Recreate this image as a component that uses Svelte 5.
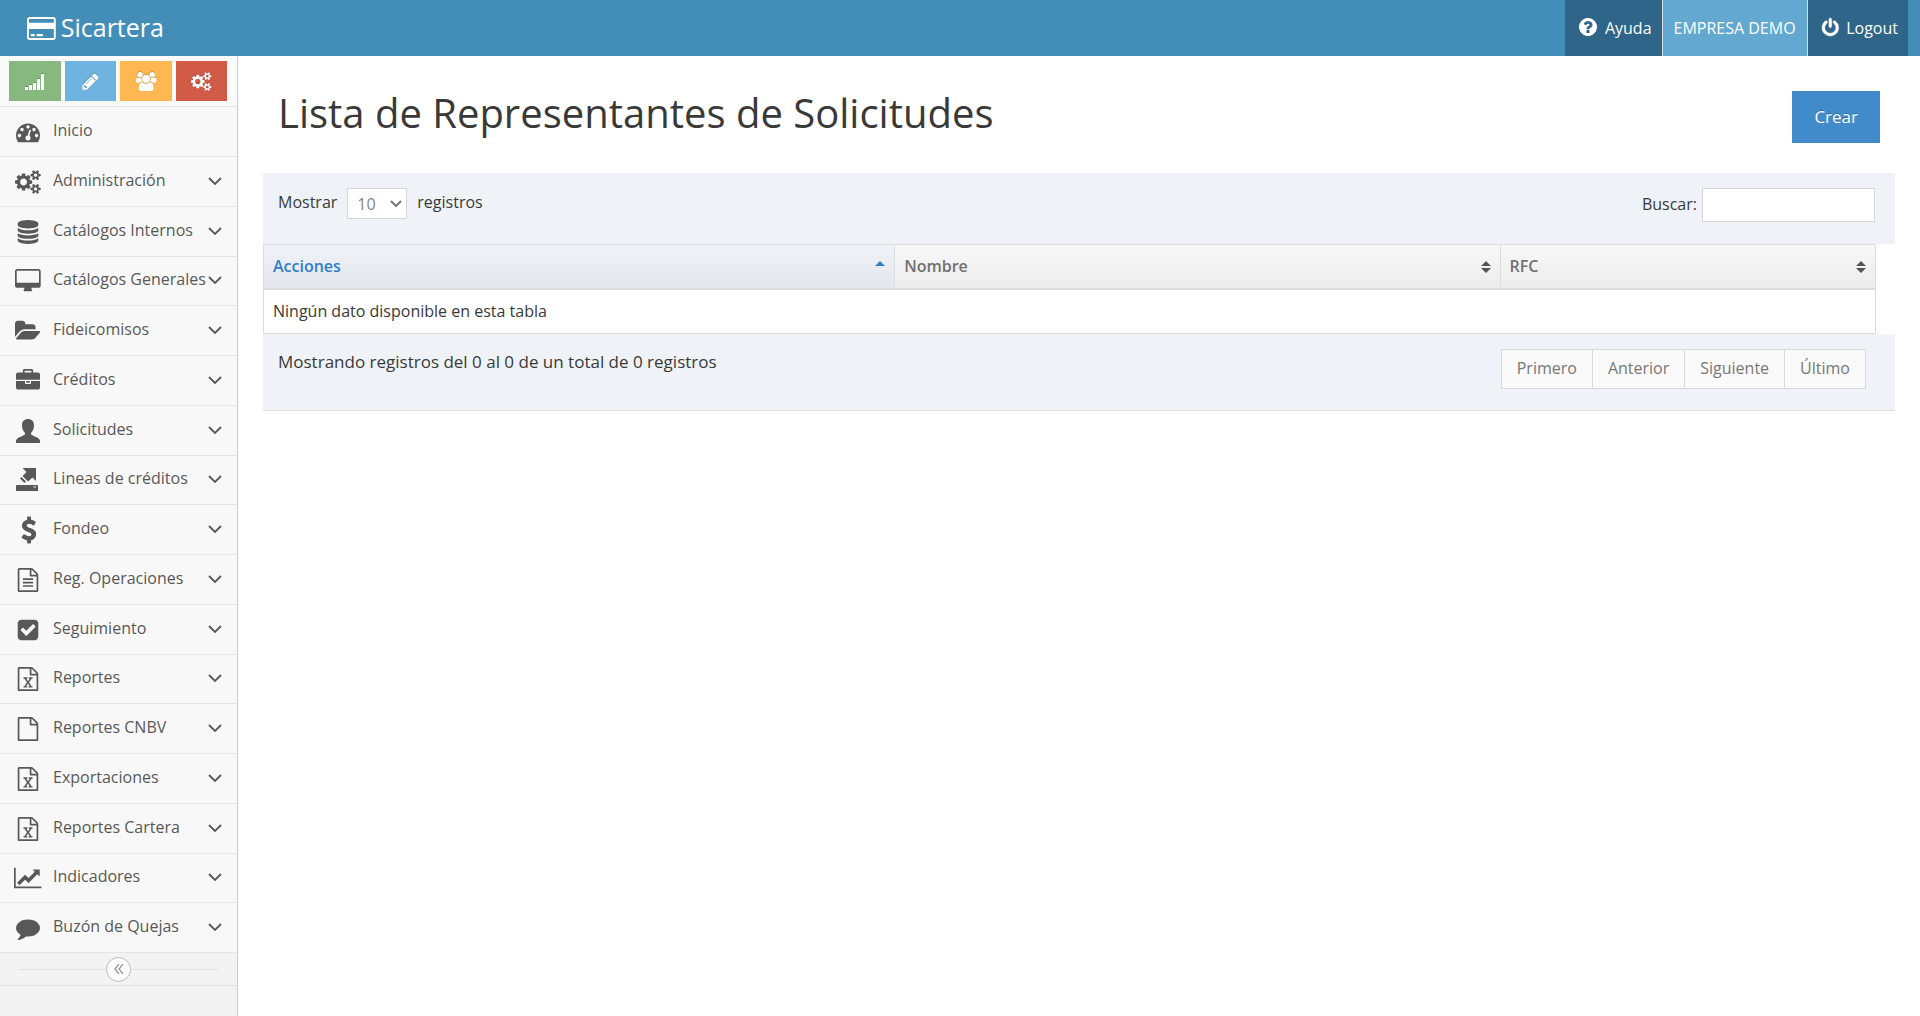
<script>
  const gears =
    'M832 896q0-106-75-181t-181-75-181 75-75 181 75 181 181 75 181-75 75-181zm768 512q0-52-38-90t-90-38-90 38-38 90q0 53 37.5 90.5t90.5 37.5 90.5-37.5 37.5-90.5zm0-1024q0-52-38-90t-90-38-90 38-38 90q0 53 37.5 90.5t90.5 37.5 90.5-37.5 37.5-90.5zm-384 421v185q0 10-7 19.5t-16 10.5l-155 24q-11 35-32 76 34 48 90 115 7 10 7 20 0 12-7 19-23 30-82.5 89.5t-78.5 59.5q-11 0-21-7l-115-90q-37 19-77 31-11 108-23 155-7 24-30 24h-186q-11 0-20-7.5t-10-17.5l-23-153q-34-10-75-31l-118 89q-7 7-20 7-11 0-21-8-144-133-144-160 0-9 7-19 10-14 41-53t47-61q-23-44-35-82l-152-24q-10-1-17-9.5t-7-19.5v-185q0-10 7-19.5t16-10.5l155-24q11-35 32-76-34-48-90-115-7-11-7-20 0-12 7-20 22-30 82-89t79-59q11 0 21 7l115 90q34-18 77-32 11-108 23-154 7-24 30-24h186q11 0 20 7.5t10 17.5l23 153q34 10 75 31l118-89q8-7 20-7 11 0 21 8 144 133 144 160 0 9-7 19-12 16-42 54t-45 60q23 48 34 82l152 23q10 2 17 10.5t7 19.5zm640 533v140q0 16-149 31-12 27-30 52 51 113 51 138 0 4-4 7-122 71-124 71-8 0-46-47t-52-68q-20 2-30 2t-30-2q-14 21-52 68t-46 47q-2 0-124-71-4-3-4-7 0-25 51-138-18-25-30-52-149-15-149-31v-140q0-16 149-31 13-29 30-52-51-113-51-138 0-4 4-7 4-2 35-20t59-34 30-16q8 0 46 46.5t52 67.5q20-2 30-2t30 2q51-71 92-112l6-2q4 0 124 70 4 3 4 7 0 25-51 138 17 23 30 52 149 15 149 31zm0-1024v140q0 16-149 31-12 27-30 52 51 113 51 138 0 4-4 7-122 71-124 71-8 0-46-47t-52-68q-20 2-30 2t-30-2q-14 21-52 68t-46 47q-2 0-124-71-4-3-4-7 0-25 51-138-18-25-30-52-149-15-149-31v-140q0-16 149-31 13-29 30-52-51-113-51-138 0-4 4-7 4-2 35-20t59-34 30-16q8 0 46 46.5t52 67.5q20-2 30-2t30 2q51-71 92-112l6-2q4 0 124 70 4 3 4 7 0 25-51 138 17 23 30 52 149 15 149 31z';
  const page =
    'M1596 380q28 28 48 76t20 88v1152q0 40-28 68t-68 28h-1344q-40 0-68-28t-28-68v-1600q0-40 28-68t68-28h896q40 0 88 20t76 48zm-444-244v376h376q-10-29-22-41l-313-313q-12-12-41-22zm384 1528v-1024h-416q-40 0-68-28t-28-68v-416h-768v1536h1280z';

  const icons = {
    signal: {
      box: '0 0 19 19',
      path: 'M0 15h3v3H0zM4 13h3v5H4zM8 11h3v7H8zM12 7h3v11h-3zM16 2h3v16h-3z'
    },
    pencil: {
      box: '0 0 1792 1792',
      path: 'M491 1536l91-91-235-235-91 91v107h128v128h107zm523-928q0-22-22-22-10 0-17 7l-542 542q-7 7-7 17 0 22 22 22 10 0 17-7l542-542q7-7 7-17zm-54-192l416 416-832 832h-416v-416zm683 96q0 53-37 90l-166 166-416-416 166-165q36-38 90-38 53 0 91 38l235 234q37 39 37 91z'
    },
    users: {
      box: '64 0 1920 1792',
      path: 'M657 896q-162 5-265 128h-134q-82 0-138-40.5t-56-118.5q0-353 124-353 6 0 43.5 21t97.5 42.5 119 21.5q67 0 133-23-5 37-5 66 0 159 93 283zm1071 637q0 120-73 189.5t-194 69.5h-874q-121 0-194-69.5t-73-189.5q0-53 3.5-103.5t14-109 26.5-108.5 43-97.5 62-81 85.5-53.5 111.5-20q10 0 43 21.5t73 48 107 48 135 21.5 135-21.5 107-48 73-48 43-21.5q61 0 111.5 20t85.5 53.5 62 81 43 97.5 26.5 108.5 14 109 3.5 103.5zm-1024-1277q0 106-75 181t-181 75-181-75-75-181 75-181 181-75 181 75 75 181zm704 384q0 159-112.5 271.5t-271.5 112.5-271.5-112.5-112.5-271.5 112.5-271.5 271.5-112.5 271.5 112.5 112.5 271.5zm576 225q0 78-56 118.5t-138 40.5h-134q-103-123-265-128 93-124 93-283 0-29-5-66 66 23 133 23 59 0 119-21.5t97.5-42.5 43.5-21q124 0 124 353zm-128-609q0 106-75 181t-181 75-181-75-75-181 75-181 181-75 181 75 75 181z'
    },
    gears: { box: '-64 0 1920 1792', path: gears },
    dashboard: {
      box: '0 0 1792 1792',
      path: 'M384 1152q0-53-37.5-90.5t-90.5-37.5-90.5 37.5-37.5 90.5 37.5 90.5 90.5 37.5 90.5-37.5 37.5-90.5zm192-448q0-53-37.5-90.5t-90.5-37.5-90.5 37.5-37.5 90.5 37.5 90.5 90.5 37.5 90.5-37.5 37.5-90.5zm428 481l101-382q6-26-7.5-48.5t-38.5-29.5-48 6.5-30 39.5l-101 382q-60 5-107 43.5t-63 98.5q-20 77 20 146t117 89 146-20 89-117q16-60-6-117t-72-91zm660-33q0-53-37.5-90.5t-90.5-37.5-90.5 37.5-37.5 90.5 37.5 90.5 90.5 37.5 90.5-37.5 37.5-90.5zm-640-640q0-53-37.5-90.5t-90.5-37.5-90.5 37.5-37.5 90.5 37.5 90.5 90.5 37.5 90.5-37.5 37.5-90.5zm448 192q0-53-37.5-90.5t-90.5-37.5-90.5 37.5-37.5 90.5 37.5 90.5 90.5 37.5 90.5-37.5 37.5-90.5zm320 448q0 261-141 483-19 29-54 29h-1402q-35 0-54-29-141-221-141-483 0-182 71-348t191-286 286-191 348-71 348 71 286 191 191 286 71 348z'
    },
    database: {
      box: '0 0 1792 1792',
      path: 'M896 768q237 0 443-43t325-127v170q0 69-103 128t-280 93.5-385 34.5-385-34.5-280-93.5-103-128v-170q119 84 325 127t443 43zm0 768q237 0 443-43t325-127v170q0 69-103 128t-280 93.5-385 34.5-385-34.5-280-93.5-103-128v-170q119 84 325 127t443 43zm0-384q237 0 443-43t325-127v170q0 69-103 128t-280 93.5-385 34.5-385-34.5-280-93.5-103-128v-170q119 84 325 127t443 43zm0-1152q208 0 385 34.5t280 93.5 103 128v128q0 69-103 128t-280 93.5-385 34.5-385-34.5-280-93.5-103-128v-128q0-69 103-128t280-93.5 385-34.5z'
    },
    desktop: {
      box: '-64 0 1920 1792',
      path: 'M1728 992v-832q0-13-9.5-22.5t-22.5-9.5h-1600q-13 0-22.5 9.5t-9.5 22.5v832q0 13 9.5 22.5t22.5 9.5h1600q13 0 22.5-9.5t9.5-22.5zm128-832v1088q0 66-47 113t-113 47h-544q0 37 16 77.5t32 71 16 43.5q0 26-19 45t-45 19h-512q-26 0-45-19t-19-45q0-14 16-44t32-70 16-78h-544q-66 0-113-47t-47-113v-1088q0-66 47-113t113-47h1600q66 0 113 47t47 113z'
    },
    folder: {
      box: '-64 0 1920 1792',
      path: 'M1815 952q0 31-31 66l-336 396q-43 51-120.5 86.5t-143.5 35.5h-1088q-34 0-60.5-13t-26.5-43q0-31 31-66l336-396q43-51 120.5-86.5t143.5-35.5h1088q34 0 60.5 13t26.5 43zm-343-344v160h-832q-94 0-197 47.5t-164 119.5l-337 396-5 6q0-4-.5-12.5t-.5-12.5v-960q0-92 66-158t158-66h320q92 0 158 66t66 158v32h544q92 0 158 66t66 158z'
    },
    briefcase: {
      box: '0 0 1792 1792',
      path: 'M640 256h512v-128h-512v128zm1152 640v480q0 66-47 113t-113 47h-1472q-66 0-113-47t-47-113v-480h672v160q0 26 19 45t45 19h320q26 0 45-19t19-45v-160h672zm-768 0v128h-256v-128h256zm768-480v384h-1792v-384q0-66 47-113t113-47h352v-160q0-40 28-68t68-28h576q40 0 68 28t28 68v160h352q66 0 113 47t47 113z'
    },
    user: {
      box: '0 0 24 24',
      path: 'M12 0c3.500 0 6 2.200 6 6.200 0 3-.9 5.400-2.500 7.100-.7.800-.7 2.200.3 2.800 1.700 1 5.200 2.200 7 3.600.8.600 1.200 1.500 1.200 2.500V24H0v-1.800c0-1 .4-1.900 1.200-2.500 1.800-1.400 5.300-2.600 7-3.600 1-.6 1-2 .3-2.800C6.900 11.600 6 9.200 6 6.200 6 2.200 8.500 0 12 0z'
    },
    launch: {
      box: '0 0 24 24',
      path: 'M6.500 0H20v13l-3.500-3.500-4.500 4-5.500-5.500 4-4zM5.500 9l4.500 4.500-1.500 1.500L4 10.500zM0 18q0-1 1-1h20q1 0 1 1v5h-22zM17.500 18.500v1h2.500v-1z'
    },
    dollar: {
      box: '0 64 1664 1664',
      bold: 70,
      path: 'M1362 1185q0 153-99.500 263.500t-258.500 136.500v175q0 14-9 23t-23 9h-135q-13 0-22.500-9.500t-9.500-22.500v-175q-66-9-127.500-31t-101.500-44.500-74-48-46.500-37.500-17.500-18q-17-21-2-41l103-135q7-10 23-12 15-2 24 9l2 2q113 99 243 125 37 8 74 8 81 0 142.500-43t61.500-122q0-28-15-53t-33.500-42-58.500-37.500-66-32-80-32.500q-39-16-61.500-25t-61.500-26.500-62.500-31-56.500-35.500-53.500-42.500-43.500-49-35.500-58-21-66.500-8.500-78q0-138 98-242t255-134v-180q0-13 9.500-22.500t22.500-9.500h135q14 0 23 9t9 23v176q57 6 110.500 23t87 33.500 63.500 37.500 39 29 15 14q17 18 5 38l-81 146q-8 15-23 16-14 3-27-7-3-3-14.500-12t-39-26.500-58.500-32-74.500-26-85.500-11.500q-95 0-155 43t-60 111q0 26 8.500 48t29.500 41.500 39.500 33 56 31 60.500 27 70 27.500q53 20 81 31.500t76 35 75.500 42.500 62 50 53 63.500 31.500 76.500 13 94z'
    },
    fileText: {
      box: '0 0 1792 1792',
      path: page + 'M512 768h768v128h-768zM512 1024h768v128h-768zM512 1280h768v128h-768z'
    },
    check: {
      box: '0 0 1792 1792',
      path: 'M813 1299l614-614q19-19 19-45t-19-45l-102-102q-19-19-45-19t-45 19l-467 467-211-211q-19-19-45-19t-45 19l-102 102q-19 19-19 45t19 45l358 358q19 19 45 19t45-19zm851-883v960q0 119-84.500 203.500t-203.500 84.500h-960q-119 0-203.500-84.500t-84.500-203.500v-960q0-119 84.500-203.500t203.500-84.500h960q119 0 203.500 84.500t84.500 203.500z'
    },
    excel: {
      box: '0 0 1792 1792',
      path: page + 'm-979-234v106h281v-106h-75l103-161q5-7 10-16.500t7.500-13.500 3.500-4h2q1 4 5 10 2 4 4.500 7.500t6 8 6.500 8.500l107 161h-76v106h291v-106h-68l-192-273 195-282h67v-107h-279v107h74l-103 159q-4 7-10 16.500t-9 13.500l-2 3h-2q-1-4-5-10-6-11-17-23l-106-159h76v-107h-290v107h68l189 272-194 283h-68z'
    },
    file: { box: '0 0 1792 1792', path: page },
    chart: {
      box: '0 0 2048 1792',
      path: 'M2048 1536v128h-2048v-1536h128v1408h1920zm-128-1248v435q0 21-19.500 29.500t-35.500-7.500l-121-121-633 633q-10 10-23 10t-23-10l-233-233-416 416-192-192 585-585q10-10 23-10t23 10l233 233 464-464-121-121q-16-16-7.500-35.500t29.500-19.500h435q14 0 23 9t9 23z'
    },
    comment: {
      box: '0 0 1792 1792',
      path: 'M1792 896q0 174-120 321.500t-326 233-450 85.500q-70 0-145-8-198 175-460 242-49 14-114 22-17 2-30.500-9t-17.500-29v-1q-3-4-.5-12t2-10 4.500-9.500l6-9 7-8.500 8-9q7-8 31-34.500t34.500-38 31-39.500 32.500-51 27-59 26-76q-157-89-247.500-220t-90.500-281q0-130 71-248.500t191-204.500 286-136.500 348-50.500q244 0 450 85.500t326 233 120 321.500z'
    },
    card: {
      box: '0 0 1920 1536',
      path: 'M1760 0q66 0 113 47t47 113v1216q0 66-47 113t-113 47h-1600q-66 0-113-47t-47-113v-1216q0-66 47-113t113-47zM160 128q-32 0-32 32v224h1664v-224q0-32-32-32zM1760 1408q32 0 32-32v-576h-1664v576q0 32 32 32zM256 1280v-144h256v144zM640 1280v-144h416v144z'
    },
    help: {
      box: '128 128 1536 1536',
      path: 'M1024 1376v-192q0-14-9-23t-23-9h-192q-14 0-23 9t-9 23v192q0 14 9 23t23 9h192q14 0 23-9t9-23zm256-672q0-88-55.500-163t-138.500-116-170-41q-243 0-371 213-15 24 8 42l132 100q7 6 19 6 16 0 25-12 53-68 86-92 34-24 86-24 48 0 85.500 26t37.500 59q0 38-20 61t-68 45q-63 28-115.500 86.500t-52.500 125.500v36q0 14 9 23t23 9h192q14 0 23-9t9-23q0-19 21.500-49.500t54.500-49.500q32-18 49-28.500t46-35 44.500-48 28-60.500 12.500-81zm384 192q0 209-103 385.500t-279.500 279.500-385.500 103-385.500-103-279.500-279.500-103-385.500 103-385.500 279.500-279.500 385.500-103 385.500 103 279.500 279.500 103 385.500z'
    },
    power: {
      box: '128 0 1536 1664',
      bold: 40,
      path: 'M1664 896q0 156-61 298t-164 245-245 164-298 61-298-61-245-164-164-245-61-298q0-182 80.500-343t226.500-270q43-32 95.500-25t83.500 50q32 42 24.500 94.500t-49.500 84.500q-98 74-151.500 181t-53.500 228q0 104 40.500 198.500t109.500 163.500 163.500 109.500 198.500 40.500 198.500-40.500 163.500-109.500 109.500-163.500 40.500-198.500q0-121-53.500-228t-151.500-181q-42-32-49.500-84.500t24.500-94.500q31-43 84-50t95 25q146 109 226.500 270t80.500 343zm-640-768v640q0 52-38 90t-90 38-90-38-38-90v-640q0-52 38-90t90-38 90 38 38 90z'
    }
  };

  const shortcuts = [
    { icon: 'signal', color: 'green', label: 'Estadísticas' },
    { icon: 'pencil', color: 'blue', label: 'Editar' },
    { icon: 'users', color: 'orange', label: 'Usuarios' },
    { icon: 'gears', color: 'red', label: 'Configuración' }
  ];

  const menu = [
    { label: 'Inicio', icon: 'dashboard', leaf: true },
    { label: 'Administración', icon: 'gears' },
    { label: 'Catálogos Internos', icon: 'database' },
    { label: 'Catálogos Generales', icon: 'desktop' },
    { label: 'Fideicomisos', icon: 'folder' },
    { label: 'Créditos', icon: 'briefcase' },
    { label: 'Solicitudes', icon: 'user' },
    { label: 'Lineas de créditos', icon: 'launch' },
    { label: 'Fondeo', icon: 'dollar' },
    { label: 'Reg. Operaciones', icon: 'fileText' },
    { label: 'Seguimiento', icon: 'check' },
    { label: 'Reportes', icon: 'excel' },
    { label: 'Reportes CNBV', icon: 'file' },
    { label: 'Exportaciones', icon: 'excel' },
    { label: 'Reportes Cartera', icon: 'excel' },
    { label: 'Indicadores', icon: 'chart' },
    { label: 'Buzón de Quejas', icon: 'comment' }
  ];

  const pages = ['Primero', 'Anterior', 'Siguiente', 'Último'];

  let collapsed = $state(false);
  let search = $state('');
  let pageSize = $state('10');
</script>

{#snippet icon(name)}
  <svg class="icon" viewBox={icons[name].box} fill="currentColor" fill-rule="evenodd" aria-hidden="true">
    <path d={icons[name].path} stroke="currentColor" stroke-width={icons[name].bold ?? 0} />
  </svg>
{/snippet}

{#snippet sorter()}
  <svg class="sorter" viewBox="0 0 10 14" aria-hidden="true">
    <path d="M5 1l5 5H0zM5 13l5-5H0z" />
  </svg>
{/snippet}

<div class="app">
  <header class="navbar">
    <a class="brand" href="#inicio">{@render icon('card')}<span>Sicartera</span></a>
    <nav class="user-nav">
      <a class="dark" href="#ayuda">{@render icon('help')}Ayuda</a>
      <a class="light" href="#empresa">EMPRESA DEMO</a>
      <a class="dark" href="#logout">{@render icon('power')}Logout</a>
    </nav>
  </header>

  <div class="body">
    <aside class="sidebar" class:collapsed>
      <div class="shortcuts">
        {#each shortcuts as item}
          <button class={item.color} aria-label={item.label}>{@render icon(item.icon)}</button>
        {/each}
      </div>

      <ul class="menu">
        {#each menu as item}
          <li>
            <a href="#{item.icon}">
              <span class="menu-icon">{@render icon(item.icon)}</span>
              <span class="menu-text">{item.label}</span>
              {#if !item.leaf}
                <svg class="arrow" viewBox="0 0 14 8" aria-hidden="true">
                  <path d="M1 1l6 6 6-6" />
                </svg>
              {/if}
            </a>
          </li>
        {/each}
      </ul>

      <div class="toggle">
        <button aria-label="Contraer menú" onclick={() => (collapsed = !collapsed)}>
          <svg viewBox="0 0 10 10" aria-hidden="true">
            <path d="M5 0L1 5l4 5M9 0L5 5l4 5" />
          </svg>
        </button>
      </div>
    </aside>

    <main>
      <div class="page-header">
        <h1>Lista de Representantes de Solicitudes</h1>
        <button class="create">Crear</button>
      </div>

      <section class="data">
        <div class="toolbar">
          <label class="length">
            <span>Mostrar</span>
            <div class="select">
              <select bind:value={pageSize}>
                <option>10</option>
                <option>25</option>
                <option>50</option>
                <option>100</option>
              </select>
              <svg viewBox="0 0 12 8" aria-hidden="true">
                <path d="M1 1l5 5 5-5" />
              </svg>
            </div>
            <span>registros</span>
          </label>
          <label class="search">
            <span>Buscar:</span>
            <input type="text" bind:value={search} />
          </label>
        </div>

        <div class="table-box">
          <table>
            <thead>
              <tr>
                <th class="actions sorted">
                  <div>
                    Acciones
                    <svg class="sorter" viewBox="0 0 10 14" aria-hidden="true">
                      <path d="M5 1l5 5H0z" />
                    </svg>
                  </div>
                </th>
                <th class="name"><div>Nombre {@render sorter()}</div></th>
                <th><div>RFC {@render sorter()}</div></th>
              </tr>
            </thead>
            <tbody>
              <tr>
                <td colspan="3">Ningún dato disponible en esta tabla</td>
              </tr>
            </tbody>
          </table>
        </div>

        <div class="footer">
          <div class="info">Mostrando registros del 0 al 0 de un total de 0 registros</div>
          <div class="pagination">
            {#each pages as label}
              <button>{label}</button>
            {/each}
          </div>
        </div>
      </section>
    </main>
  </div>
</div>

<style>
  :global(body) {
    background: #fff;
  }

  .app {
    display: flex;
    flex-direction: column;
    min-height: 100vh;
    font-family: 'Open Sans', sans-serif;
    font-size: 16px;
    line-height: 24px;
    color: #393939;
  }

  button,
  input,
  select {
    font: inherit;
  }

  a {
    color: inherit;
    text-decoration: none;
  }

  .icon {
    display: block;
    flex: none;
    height: 24px;
    overflow: visible;
  }

  .navbar {
    display: flex;
    justify-content: space-between;
    height: 56px;
    padding: 0 12px 0 27px;
    background: #438eb9;
    color: #fff;
  }

  .brand {
    display: flex;
    align-items: center;
    gap: 5px;
    font-size: 25px;
  }

  .brand span {
    padding-bottom: 2px;
  }

  .brand .icon {
    height: 23px;
  }

  .user-nav {
    display: flex;
  }

  .user-nav a {
    display: flex;
    align-items: center;
    gap: 8px;
    padding: 0 11px;
  }

  .user-nav a + a {
    border-left: 1px solid #ddd;
  }

  .user-nav .icon {
    height: 18px;
    margin-bottom: 2px;
  }

  .user-nav .dark {
    padding: 0 10px 0 14px;
    background: #2e6589;
  }

  .user-nav .light {
    background: #62a8d1;
  }

  .body {
    display: flex;
    flex: 1;
  }

  .sidebar {
    flex: none;
    box-sizing: border-box;
    width: 238px;
    border-right: 1px solid #ccc;
    background: #f2f2f2;
  }

  .shortcuts {
    display: flex;
    gap: 4px;
    padding: 5px 10px 5px 9px;
    background: #fafafa;
  }

  .shortcuts button {
    display: flex;
    flex: 1;
    align-items: center;
    justify-content: center;
    height: 40px;
    padding: 0;
    border: 0;
    color: #fff;
    cursor: pointer;
  }

  .shortcuts .icon {
    height: 19px;
    filter: drop-shadow(0 -1px 0 rgba(0, 0, 0, 0.2));
  }

  .shortcuts .green {
    background: #87b87f;
  }

  .shortcuts .blue {
    background: #6fb3e0;
  }

  .shortcuts .orange {
    background: #ffb752;
  }

  .shortcuts .red {
    background: #d15b47;
  }

  .menu {
    margin: 0;
    padding: 0;
    border-bottom: 1px solid #e5e5e5;
    list-style: none;
  }

  .menu li {
    box-sizing: border-box;
    height: 50px;
    border-top: 1px solid #e5e5e5;
    background: #f8f8f8;
  }

  .menu li:nth-child(4n) {
    height: 49px;
  }

  .menu a {
    display: flex;
    align-items: center;
    height: 100%;
    padding: 0 15px 0 9px;
    color: #585858;
  }

  .menu a:hover {
    color: #1963aa;
  }

  .menu-icon {
    display: flex;
    flex: none;
    justify-content: center;
    width: 38px;
    margin-right: 6px;
  }

  .menu-text {
    flex: 1;
    padding-bottom: 4px;
    white-space: nowrap;
  }

  .arrow {
    flex: none;
    width: 14px;
    margin-bottom: 2px;
    fill: none;
    stroke: currentColor;
    stroke-width: 1.8;
  }

  .collapsed {
    width: 56px;
    overflow: hidden;
  }

  .toggle {
    display: flex;
    align-items: center;
    height: 32px;
    padding: 0 19px;
    border-bottom: 1px solid #e0e0e0;
    background: #f3f3f3;
  }

  .toggle::before,
  .toggle::after {
    flex: 1;
    border-top: 1px solid #e0e0e0;
    content: '';
  }

  .toggle button {
    display: flex;
    align-items: center;
    justify-content: center;
    width: 25px;
    height: 25px;
    padding: 0;
    border: 1px solid #bbb;
    border-radius: 50%;
    background: #fff;
    cursor: pointer;
  }

  .toggle svg {
    width: 10px;
    fill: none;
    stroke: #999;
    stroke-width: 1.4;
  }

  main {
    flex: 1;
    min-width: 0;
    padding: 35px 25px 0;
  }

  .page-header {
    display: flex;
    align-items: flex-start;
    justify-content: space-between;
    padding: 0 15px 30px;
  }

  h1 {
    margin: 0;
    font-size: 40px;
    font-weight: 400;
    line-height: 44px;
  }

  .create {
    height: 52px;
    padding: 0 22px;
    border: 0;
    background: #428bca;
    color: #fff;
    font-size: 17px;
    text-shadow: 0 -1px 0 rgba(0, 0, 0, 0.25);
    cursor: pointer;
  }

  .data {
    border-bottom: 1px solid #e0e0e0;
  }

  .toolbar,
  .footer {
    display: flex;
    align-items: flex-start;
    justify-content: space-between;
    background: #eff3f8;
  }

  .toolbar {
    padding: 15px 20px 22px 15px;
  }

  .length,
  .search {
    display: flex;
    align-items: center;
  }

  .length {
    gap: 10px;
  }

  .search {
    gap: 5px;
  }

  .length span,
  .search span {
    padding-bottom: 3px;
  }

  .select {
    position: relative;
  }

  .select svg {
    position: absolute;
    top: 12px;
    right: 5px;
    width: 12px;
    fill: none;
    stroke: #777;
    stroke-width: 2;
    pointer-events: none;
  }

  select {
    display: block;
    box-sizing: border-box;
    width: 60px;
    height: 31px;
    padding: 0 0 0 9px;
    border: 1px solid #d5d5d5;
    border-radius: 0;
    appearance: none;
    background: #fff;
    color: #858585;
  }

  input {
    box-sizing: border-box;
    width: 173px;
    height: 34px;
    padding: 0 7px;
    border: 1px solid #d5d5d5;
    background: #fff;
    color: #858585;
  }

  .table-box {
    padding-right: 19px;
  }

  table {
    width: 100%;
    border: 1px solid #ddd;
    border-collapse: separate;
    border-spacing: 0;
    box-sizing: border-box;
    table-layout: fixed;
    line-height: 23px;
  }

  th,
  td {
    padding: 10px 9px;
  }

  th {
    border-bottom: 2px solid #ddd;
    background: linear-gradient(#f8f8f8, #ececec);
    color: #707070;
    font-weight: 600;
    text-align: left;
  }

  th + th {
    border-left: 1px solid #ddd;
  }

  th div {
    display: flex;
    align-items: center;
    justify-content: space-between;
  }

  .actions {
    width: 38%;
  }

  .name {
    width: 36.4%;
  }

  .sorted {
    background: linear-gradient(#eff3f8, #e3e7ed);
    color: #307ecc;
  }

  .sorter {
    width: 10px;
    height: 14px;
    fill: #555;
  }

  .sorted .sorter {
    fill: #307ecc;
  }

  td {
    background: #fff;
  }

  .footer {
    padding: 15px 29px 21px 15px;
  }

  .info {
    font-size: 17px;
    line-height: 26px;
  }

  .pagination {
    display: flex;
  }

  .pagination button {
    height: 40px;
    padding: 0 15px 2px;
    border: 1px solid #d9d9d9;
    background: #fafafa;
    color: #777;
    cursor: pointer;
  }

  .pagination button + button {
    border-left: 0;
  }
</style>
